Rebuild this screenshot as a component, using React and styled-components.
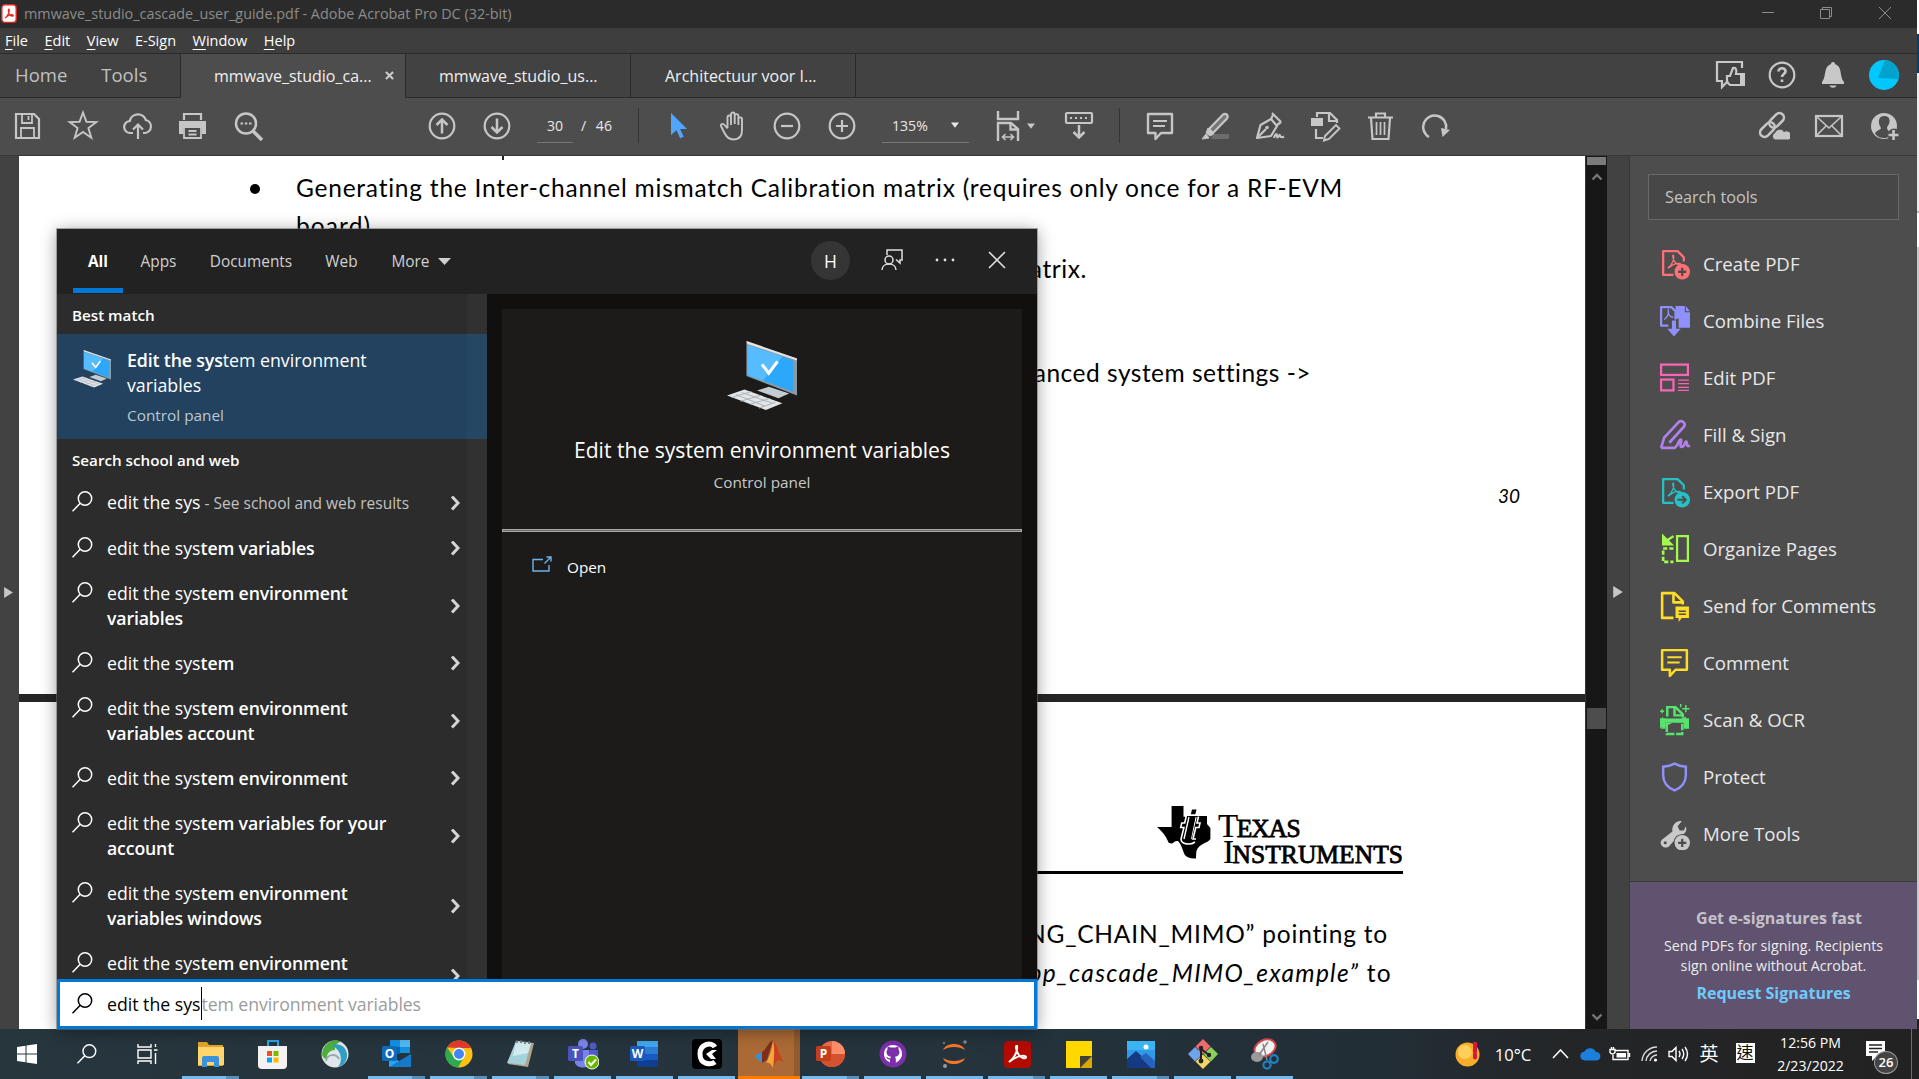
import React from "react";
import styled, { createGlobalStyle, css } from "styled-components";

const Global = createGlobalStyle`
  * { box-sizing: border-box; }
  html, body { margin: 0; background: #1e1e1e; overflow: hidden; }
  svg { display: block; flex: none; }
`;

/* ---------- window shell ---------- */
const Screen = styled.div`
  position: relative;
  width: 1919px;
  height: 1079px;
  display: flex;
  flex-direction: column;
  overflow: hidden;
  font-family: "Open Sans", "Noto Sans CJK TC", sans-serif;
  color: #e6e6e6;
`;
const Desktop = styled.div`
  display: flex;
  height: 1029px;
`;
const Window = styled.div`
  width: 1917px;
  display: flex;
  flex-direction: column;
`;
const EdgeStrip = styled.div`
  width: 2px;
  background: linear-gradient(#fff 0 34px, #00407a 34px 73px, #ececec 73px 211px, #b8b8b8 211px 213px, #fff 213px 247px, #c9c9c9 247px 980px, #fff 980px 1019px, #222 1019px);
`;
const TitleBar = styled.div`
  height: 28px;
  display: flex;
  align-items: center;
  padding: 0 0 1px 1px;
  background: #2b2b2b;
  color: #8c8c8c;
  font-size: 14.4px;
  white-space: pre;
  svg { margin-right: 7px; }
`;
const WinButtons = styled.div`
  margin-left: auto;
  display: flex;
  padding-right: 3px;
  svg { margin: 0; }
`;
const MenuBar = styled.div`
  height: 26px;
  display: flex;
  align-items: center;
  gap: 16.5px;
  padding: 0 5px 1px;
  background: #3e3e3e;
  border-bottom: 1px solid #2a2a2a;
  color: #fff;
  font-size: 14.5px;
`;
const Mnemonic = styled.span`
  text-decoration: underline;
  text-underline-offset: 3px;
`;
const TabBar = styled.div`
  height: 44px;
  display: flex;
  background: #424242;
`;
const HomeTabs = styled.div`
  width: 181px;
  padding: 0 0 2px 15px;
  display: flex;
  align-items: center;
  gap: 34px;
  color: #c0c0c0;
  font-size: 18.5px;
  border-bottom: 1px solid #2a2a2a;
  border-right: 1px solid #2a2a2a;
`;
const FileTab = styled.div`
  width: ${(p) => p.$w}px;
  padding: 0 11px 0 ${(p) => p.$pl || 33}px;
  display: flex;
  align-items: center;
  justify-content: space-between;
  font-size: 16px;
  color: #f0f0f0;
  border-right: 1px solid #2a2a2a;
  border-bottom: 1px solid ${(p) => (p.$active ? "#4d4d4d" : "#2a2a2a")};
  background: ${(p) => (p.$active ? "#4d4d4d" : "transparent")};
`;
const TabRest = styled.div`
  flex: 1;
  display: flex;
  align-items: center;
  justify-content: flex-end;
  padding: 0 18px 1px 0;
  gap: 19.600px;
  color: #c8c8c8;
  border-bottom: 1px solid #2a2a2a;
`;
const ToolBar = styled.div`
  height: 58px;
  display: flex;
  align-items: center;
  padding-bottom: 2px;
  background: #4d4d4d;
  border-bottom: 1px solid #383838;
  color: #c6c6c6;
`;
const Group = styled.div`
  display: flex;
  align-items: center;
  margin-left: ${(p) => p.$gap || 0}px;
  ${(p) => p.$end && css`margin-left: auto; padding-right: 6px;`}
`;
const ToolButton = styled.div`
  width: ${(p) => p.$w || 55}px;
  display: flex;
  justify-content: center;
`;
const Field = styled.div`
  width: ${(p) => p.$w}px;
  height: 33px;
  margin: 2px 0 0 ${(p) => p.$gap}px;
  padding: 0 10px 2px;
  display: flex;
  align-items: center;
  justify-content: space-between;
  border-bottom: 1px solid #767676;
  color: #e8e8e8;
  font-size: 14.1px;
`;
const PageTotal = styled.span`
  margin-left: 8px;
  color: #e8e8e8;
  font-size: 14.1px;
  word-spacing: 6px;
`;
const Divider = styled.div`
  width: 1px;
  height: 35px;
  background: #353535;
  margin-left: ${(p) => p.$gap}px;
`;

/* ---------- document ---------- */
const Body = styled.div`
  flex: 1;
  display: flex;
  min-height: 0;
`;
const Rail = styled.div`
  width: ${(p) => p.$w}px;
  display: flex;
  align-items: center;
  justify-content: center;
  padding: 0 ${(p) => (p.$right ? 0 : 3)}px 1px 0;
  background: #424242;
  color: #c6c6c6;
  ${(p) => p.$right && css`border-right: 1px solid #383838;`}
`;
const Doc = styled.div`
  width: 1566px;
  display: flex;
  flex-direction: column;
  gap: 8px;
  background: #262626;
  color: #000;
  font-family: Lato, sans-serif;
  font-size: 24.5px;
  overflow: hidden;
`;
const Page = styled.div`
  height: ${(p) => p.$h}px;
  background: #fff;
  overflow: hidden;
`;
const Line = styled.div`
  height: 30px;
  line-height: 30px;
  margin-top: ${(p) => p.$mt || 0}px;
  padding-left: ${(p) => p.$left || 0}px;
  padding-right: ${(p) => p.$right || 0}px;
  text-align: ${(p) => (p.$right ? "right" : "left")};
  font-style: ${(p) => (p.$italic ? "italic" : "normal")};
  font-size: ${(p) => p.$size || 24.5}px;
  letter-spacing: ${(p) => p.$ls || 0}px;
  white-space: pre;
`;
const BulletLine = styled(Line)`
  display: flex;
  align-items: center;
  gap: 36px;
`;
const Bullet = styled.span`
  width: 10px;
  height: 10px;
  margin-top: 2px;
  border-radius: 50%;
  background: #000;
`;
const Descender = styled.div`
  width: 2px;
  height: 4px;
  margin-left: 483px;
  background: #222;
`;
const Letterhead = styled.div`
  width: 1153px;
  height: 172px;
  margin-left: 231px;
  padding: 104px 0 0 907px;
  display: flex;
  gap: 7px;
  border-bottom: 3px solid #000;
`;
const BrandName = styled.div`
  font-family: "Liberation Serif", serif;
  font-size: 25.5px;
  line-height: 26px;
  padding-top: 10px;
  letter-spacing: -0.9px;
  -webkit-text-stroke: 0.8px #000;
  div + div { padding-left: 5px; letter-spacing: 0.05px; }
`;
const BigCap = styled.span`
  font-size: 33px;
  line-height: 20px;
  letter-spacing: -1.5px;
  -webkit-text-stroke: 0.2px #000;
`;
const ScrollBar = styled.div`
  width: 22px;
  display: flex;
  flex-direction: column;
  align-items: center;
  padding: 1px 0 6px;
  background: #171717;
  border-left: 1px solid #333;
  color: #777;
`;
const ScrollBlock = styled.div`
  width: 19px;
  height: ${(p) => p.$h}px;
  margin-bottom: ${(p) => p.$mb}px;
  background: ${(p) => p.$c};
`;

/* ---------- tools pane ---------- */
const ToolsPane = styled.div`
  flex: 1;
  display: flex;
  flex-direction: column;
  background: #4d4d4d;
`;
const SearchTools = styled.div`
  height: 46px;
  margin: 18px 18px 15px;
  padding: 0 0 1px 16px;
  display: flex;
  align-items: center;
  background: #474747;
  border: 1px solid #686868;
  color: #c4c4c4;
  font-size: 16.2px;
`;
const ToolRow = styled.div`
  height: 57px;
  display: flex;
  align-items: center;
  gap: 12px;
  padding-left: 28px;
  font-size: 18.65px;
  color: #e8e8e8;
`;
const Promo = styled.div`
  margin-top: auto;
  height: 148px;
  padding-top: 25px;
  display: flex;
  flex-direction: column;
  align-items: center;
  border-top: 1px solid #3a3a3a;
  background: #5f5370;
  text-align: center;
  font-size: 14.25px;
  line-height: 20px;
  color: #ececec;
`;
const PromoTitle = styled.div`
  font-weight: 700;
  font-size: 16px;
  line-height: 22px;
  color: #c6c1c9;
  padding-left: 11px;
  margin-bottom: 7px;
`;
const PromoLink = styled.div`
  margin-top: 7px;
  font-weight: 700;
  font-size: 16px;
  color: #6fcbff;
`;

/* ---------- search flyout ---------- */
const Flyout = styled.div`
  position: absolute;
  left: 57px;
  top: 229px;
  width: 980px;
  height: 800px;
  display: flex;
  flex-direction: column;
  background: #11100e;
  box-shadow: 0 0 0 1px rgba(110, 110, 110, 0.55), 0 2px 16px rgba(0, 0, 0, 0.4);
  color: #fff;
`;
const FlyHead = styled.div`
  height: 65px;
  display: flex;
  align-items: stretch;
  background: #222;
  font-size: 15.4px;
  color: #d0d0d0;
  padding-left: 16px;
`;
const FlyTab = styled.div`
  width: ${(p) => p.$w}px;
  display: flex;
  align-items: center;
  justify-content: center;
  gap: 8px;
  padding-top: ${(p) => (p.$on ? 5 : 0)}px;
  margin-bottom: 1px;
  font-weight: ${(p) => (p.$on ? 700 : 400)};
  color: ${(p) => (p.$on ? "#fff" : "inherit")};
  border-bottom: ${(p) => (p.$on ? "5px solid #0078d7" : "none")};
`;
const FlyActions = styled.div`
  margin-left: auto;
  display: flex;
  align-items: center;
  padding: 0 31px 3px 0;
  color: #e0e0e0;
`;
const Avatar = styled.div`
  width: 39px;
  height: 39px;
  border-radius: 50%;
  background: #353535;
  display: flex;
  align-items: center;
  justify-content: center;
  color: #fff;
  font-size: 17.5px;
  padding-top: 2px;
`;
const ActionCell = styled.div`
  margin-left: ${(p) => p.$gap}px;
`;
const FlyMain = styled.div`
  height: 685px;
  display: flex;
  overflow: hidden;
`;
const Results = styled.div`
  width: 430px;
  background: linear-gradient(90deg, #2c2c2c 0 410px, #313131 410px);
`;
const Heading = styled.div`
  height: ${(p) => p.$h}px;
  padding: ${(p) => p.$pt || 0}px 0 0 15px;
  display: flex;
  align-items: center;
  font-weight: 600;
  font-size: 15.2px;
`;
const BestMatch = styled.div`
  height: 105px;
  display: flex;
  gap: 16px;
  padding: 14px 0 0 16px;
  background: linear-gradient(90deg, #22425f 0 410px, #264763 410px);
  font-size: 17.75px;
  line-height: 25px;
`;
const BestIcon = styled.div`
  padding-top: 2px;
`;
const Sub = styled.div`
  font-size: 15.35px;
  line-height: 25px;
  margin-top: ${(p) => p.$mt}px;
  color: ${(p) => p.$c};
`;
const Strong = styled.span`
  font-weight: 600;
  letter-spacing: -0.15px;
`;
const ResultRow = styled.div`
  min-height: 45px;
  display: flex;
  align-items: center;
  padding: 9px 26px 11px 15px;
  font-size: 17.7px;
  line-height: 25px;
`;
const RowIcon = styled.div`
  align-self: flex-start;
  margin: 1px 14px 0 0;
`;
const RowText = styled.div`
  flex: 1;
  white-space: pre;
`;
const Hint = styled.span`
  font-size: 15.5px;
  color: #c2c2c2;
`;
const Preview = styled.div`
  flex: 1;
  margin: 15px 15px 0;
  background: #1c1b19;
  display: flex;
  flex-direction: column;
`;
const PreviewHead = styled.div`
  height: 220px;
  padding-top: 32px;
  display: flex;
  flex-direction: column;
  align-items: center;
`;
const PreviewRule = styled.div`
  height: 3px;
  background: #6f6d6b;
  border: 1px solid #aaa8a6;
`;
const PreviewTitle = styled.div`
  margin-top: 24px;
  font-size: 21.1px;
  line-height: 30px;
`;
const OpenRow = styled.div`
  display: flex;
  align-items: center;
  gap: 15px;
  padding: 24px 0 0 30px;
  font-size: 15.3px;
  svg { margin-bottom: 5px; }
`;
const SearchInput = styled.div`
  height: 50px;
  display: flex;
  align-items: center;
  padding: 0 0 1px 12px;
  background: #fff;
  border: 3px solid #0078d7;
  color: #000;
  font-size: 17.7px;
  white-space: pre;
  svg { margin-right: 14px; }
`;
const Caret = styled.span`
  width: 1px;
  height: 33px;
  background: #000;
`;
const Ghost = styled.span`
  color: #9c9c9c;
  letter-spacing: -0.1px;
`;

/* ---------- taskbar ---------- */
const Taskbar = styled.div`
  height: 50px;
  display: flex;
  background: linear-gradient(90deg, #27353d 0, #24333c 50%, #222e36 72%, #242527 82%, #222 100%);
  color: #fff;
`;
const TaskCell = styled.div`
  width: ${(p) => p.$w || 62}px;
  display: flex;
  align-items: center;
  justify-content: center;
  padding-top: ${(p) => (p.$state ? 3 : 0)}px;
  border-bottom: ${(p) => (p.$state ? "3px solid transparent" : "none")};
  border-image: ${(p) =>
    p.$state === "one"
      ? "linear-gradient(90deg, transparent 5px, #76b9ed 5px 56px, transparent 56px) 3"
      : p.$state === "many"
      ? "linear-gradient(90deg, transparent 5px, #76b9ed 5px 45px, #5c8fb8 45px 56px, transparent 56px) 3"
      : p.$state === "hot"
      ? "linear-gradient(#ff7a00, #ff7a00) 3"
      : "none"};
  ${(p) => p.$state === "hot" && css`background: linear-gradient(90deg, #ab6a35 0 56px, #935a2e 56px);`}
`;
const PinnedApps = styled.div`
  display: flex;
  margin-left: 4px;
`;
const Tray = styled.div`
  margin-left: auto;
  display: flex;
  align-items: center;
  font-size: 16.6px;
`;
const TrayCell = styled.div`
  width: ${(p) => p.$w}px;
  display: flex;
  justify-content: center;
  white-space: pre;
  ${(p) => p.$cjk && css`font-family: "Noto Sans CJK TC", sans-serif; font-size: 19px; line-height: 24px; padding-bottom: 2px;`}
`;
const ImeMode = styled.span`
  width: 19px;
  height: 20px;
  background: #fff;
  color: #111;
  font-size: 17px;
  line-height: 18px;
  text-align: center;
`;
const Clock = styled.div`
  width: 84px;
  padding-right: 3px;
  text-align: center;
  font-size: 14.1px;
  line-height: 23px;
`;
const Notice = styled.div`
  position: relative;
  width: 57px;
  height: 40px;
  padding: 6px 0 0 11px;
`;
const Count = styled.span`
  position: absolute;
  left: 20px;
  top: 17px;
  width: 24px;
  height: 23px;
  border-radius: 50%;
  background: #444;
  border: 1px solid #9a9a9a;
  font-size: 13px;
  font-weight: 600;
  line-height: 20px;
  text-align: center;
`;
const ShowDesktop = styled.div`
  width: 8px;
  height: 50px;
  border-left: 1px solid #6a6a6a;
`;

/* ---------- icons ---------- */
const Ic = ({ s = 32, w = 2.2, children, ...r }) => (
  <svg width={s} height={s} viewBox="0 0 32 32" fill="none" stroke="currentColor" strokeWidth={w} {...r}>{children}</svg>
);
const F = "currentColor";
const Save = () => <Ic><path d="M4 4h18l5 5v19H4z" /><path d="M10 4v9h10V4M16.500 6v4M9 28V18h13v10" strokeWidth="1.800" /></Ic>;
const Star = () => <Ic w={1.9}><path d="M16 2.500l3.400 9.200 10 .3-8 6 2.900 9.700L16 22l-8.300 5.700L10.600 18l-8-6 10-.3z" /></Ic>;
const CloudUp = () => <Ic><path d="M11 23H8.500a6 6 0 0 1-.7-12 8.300 8.300 0 0 1 16-1 6.600 6.600 0 0 1-.8 13h-2" /><path d="M16 29V15M11 19.500l5-5 5 5" /></Ic>;
const Print = () => <Ic><path d="M7 10V4h17v6" /><path d="M2 11h27v13h-4v-6H6v6H2z" fill={F} stroke="none" /><path d="M7 17v11h17V17M11.500 21h8M11.500 24.500h8" strokeWidth="1.800" /></Ic>;
const Find = () => <Ic w={2.5}><circle cx="14" cy="13.500" r="10" /><path d="M21 21l9 9" strokeWidth="3.500" /><path d="M8.500 13.500h2.500M12.800 13.500h2.500M17 13.500h2.500" strokeWidth="2.200" /></Ic>;
const Up = ({ down }) => <Ic><g transform={down ? "rotate(180 16 16)" : ""}><circle cx="16" cy="16" r="12.300" /><path d="M16 23.500V10M10.500 15L16 9.500l5.500 5.500" strokeWidth="2.500" /></g></Ic>;
const PlusMinus = ({ plus }) => <Ic><circle cx="16" cy="16" r="12.300" /><path d={plus ? "M10 16h12M16 10v12" : "M10 16h12"} /></Ic>;
const Pointer = () => <Ic><path d="M9 3v22l5.500-4.700 3.600 8 3.600-1.600-3.600-7.700h7z" fill="#4ea6ff" stroke="none" /></Ic>;
const Hand = () => <Ic w={1.9}><path d="M10.500 18V7.500c0-2.700 3.500-2.700 3.500 0V15M14 13V4.500c0-2.600 3.700-2.600 3.700 0V14M17.700 6c0-2.600 3.700-2.400 3.700 0v9M21.400 9c0-2.200 3.600-2.200 3.600 0v11c0 6-3 9.500-8.500 9.500-5 0-7-2.500-9-6.500l-3.300-6.500c-1.200-2.500 1.800-3.500 3.300-1.500l3 3.500" /></Ic>;
const Fit = () => <Ic w={2.400}><path d="M6 1v8h20V1" /><path d="M6 31V13h13l7 6v12M18.500 13v6.500H26" /><path d="M10.500 27h11M13.500 24l-3 3 3 3M18.500 24l3 3-3 3" strokeWidth="1.600" /></Ic>;
const Keys = () => <Ic><rect x="3" y="3" width="26" height="10" rx="1" /><path d="M7 8h2M12 8h2M17 8h2M22 8h2" /><path d="M16 15v12M10.500 22l5.500 5.500 5.500-5.500" strokeWidth="2.500" /></Ic>;
const Note = ({ c, s }) => <Ic s={s} color={c} w={2.400}><path d="M4 4h24v19H17l-5.500 6v-6H4z" strokeLinejoin="round" /><path d="M9 11h14M9 16h12" strokeWidth="1.900" /></Ic>;
const Marker = () => <Ic><path d="M10 19L24 4.500c3-2 6 1 4 4L14 23z" fill="#777" /><path d="M9 18l6 6-4 2-4-3zM3 29l4-5 3 4z" fill={F} stroke={F} strokeWidth="1" /><path d="M12 29l3-5h15v5z" fill="#6c6c6c" stroke="none" /></Ic>;
const Nib = () => <Ic><path d="M3 28l3.500-13L17 9l6 7-6 10z" strokeLinejoin="round" /><path d="M4 27l8-8M18 3l9 9M17 9l2-4M23 15l4-3" /><circle cx="13" cy="17.500" r="1.800" fill={F} stroke="none" /><path d="M20 28c1-4 3-5 3-2s2 0 2.500-1 0 4 4.500 1.500" /></Ic>;
const Convert = () => <Ic><path d="M8 7V3h13l7 7v3M20 3v8h8" /><path d="M2 8h12v8H2z" fill={F} stroke="none" /><path d="M7 19v9h7" /><path d="M16 26L27 15l3.500 3.500L20 29l-5 1.500z" strokeWidth="1.900" /></Ic>;
const Trash = () => <Ic><path d="M4 7.500h25M12 7V3.500h9V7M7 8l1.500 21h16L26 8" /><path d="M12.500 12v13M16.500 12v13M20.500 12v13" strokeWidth="1.700" /></Ic>;
const Rotate = () => <Ic w={2.500}><path d="M10 27a11.500 11.500 0 1 1 17-8" /><path d="M31 20l-9-2 1.500 9z" fill={F} stroke="none" /></Ic>;
const LinkCloud = () => <Ic w={2.500}><g transform="rotate(-45 14 15)"><rect x="-1" y="10.500" width="17" height="9" rx="4.500" /><rect x="12" y="10.500" width="17" height="9" rx="4.500" /></g><path d="M17 30a4 4 0 0 1 0-7.500 5 5 0 0 1 9-1 4.500 4.500 0 0 1 5 8.500z" fill={F} stroke="#4d4d4d" strokeWidth="1" /></Ic>;
const Mail = () => <Ic><rect x="3" y="6" width="26" height="20" /><path d="M4 7l12 11L28 7M4 25l9-9M28 25l-9-9" strokeWidth="1.600" /></Ic>;
const AddUser = () => <Ic><circle cx="16" cy="16" r="13" fill={F} stroke="none" /><path d="M16 6c-4 0-5.500 3-5 7 .3 2.500 1.500 4 2 5 .5 1.500-5 2.500-6 5.500 2 3 5 4.500 9 4.500s6-2 6-4-3-4-3-6 2-3 2.500-6c.5-4-1.500-6-5.500-6z" fill="#4d4d4d" stroke="none" /><circle cx="26" cy="25" r="6.500" fill="#4d4d4d" stroke="none" /><path d="M25.500 20v10M20.500 25h10" strokeWidth="2.600" /></Ic>;
const Feedback = () => <Ic w={2.200}><path d="M28 9V3H3v19h5v6l6-6" /><path d="M13 17h3l3-8c3-1 4 2 3 6h6v11H16l-3-3z" /><path d="M26 14h5v13h-5z" fill={F} stroke="none" /></Ic>;
const Help = () => <Ic w={2.200}><circle cx="16" cy="16" r="12.300" /><path d="M12.500 12.500c0-4.500 7.500-4 7 0-.3 2.500-3.500 2.500-3.500 5.500M16 20.500v2.500" strokeWidth="2.600" /></Ic>;
const Bell = () => <Ic><path d="M16 3c1.500 0 2 1 2 2 8 3 4 12 9 18v2H5v-2C10 17 6 8 14 5c0-1 .5-2 2-2zM12.500 26.500h7c-1 3-6 3-7 0z" fill={F} stroke="none" /></Ic>;
const UserDisc = () => <svg width="30" height="30" viewBox="0 0 30 30"><circle cx="15" cy="15" r="15" fill="#00c8ff" /><path d="M16 0a15 15 0 0 1 13 19L9 18z" fill="#00a3cc" /></svg>;
const Tri = ({ d = "down", s = 8 }) => <svg width={s} height={s} viewBox="0 0 10 10"><path d={d === "down" ? "M0 2h10L5 8.500z" : "M1 0v10l8-5z"} fill="currentColor" /></svg>;
const MoreTri = () => <svg width="13" height="7" viewBox="0 0 13 7"><path d="M0 0h13L6.500 7z" fill="currentColor" /></svg>;
const Chev = ({ up }) => <svg width="12" height="12" viewBox="0 0 12 12" fill="none" stroke="currentColor" strokeWidth="2.300"><path d={up ? "M1.500 8.500L6 4l4.500 4.500" : "M1.500 3.500L6 8l4.500-4.500"} /></svg>;
const Lens = ({ s = 21 }) => <svg width={s} height={s} viewBox="0 0 21 21" fill="none" stroke="currentColor" strokeWidth="1.500"><circle cx="13" cy="7.500" r="6.700" /><path d="M8.200 12.300L.5 20.300" /></svg>;
const RowArrow = () => <svg width="11" height="15" viewBox="0 0 11 15" fill="none" stroke="#d4d4d4" strokeWidth="3"><path d="M2 .5l6 6.500L2 13.500" /></svg>;

const Squiggle = () => <path d="M10 20c4-3 6-9 5-12-1-1-1 3 1 6s5 4 6 3-3-2-7 0-5 4-5 3z" strokeWidth="1.300" />;
const toolIcon = {
  create: <Ic s={33} color="#ff7177"><path d="M15 27H5V4h14l6 6v4" strokeLinejoin="round" /><Squiggle /><circle cx="23.500" cy="24" r="7.500" fill={F} stroke="none" /><path d="M19.500 24h8M23.500 20v8" stroke="#4d4d4d" /></Ic>,
  combine: <Ic s={33} color="#9090fa"><path d="M10 21H3V3h10l4 4v8" strokeLinejoin="round" /><path d="M6 15c3-2 5-6 4-9-1 4 2 7 5 7" strokeWidth="1.300" /><path d="M17 2h9v6h5v15H20v-9h-3zM27 2l4 5h-4z" fill={F} stroke="none" /><path d="M13.500 16h4v8h4.500l-6.500 7.500L9 24h4.500z" fill={F} stroke="none" /></Ic>,
  edit: <Ic s={33} color="#f766b4"><rect x="3" y="3.500" width="26" height="10" /><rect x="3" y="18" width="12" height="10.500" /><path d="M19.500 18.500H30M19.500 22H30M19.500 25.500H30M19.500 28.500H30" strokeWidth="1.300" /></Ic>,
  sign: <Ic s={33} color="#b37feb" w={2.600}><path d="M3 29l3-10L20 4c3-2.500 7 1 5.500 4L11 24M3 29h13c3-1 4-8 6-8s-2 7 1 7 3-6 4.500-5-1 5 3.500 4" strokeLinejoin="round" /></Ic>,
  export: <Ic s={33} color="#26c0c7"><path d="M15 27H5V4h14l6 6v4" strokeLinejoin="round" /><Squiggle /><circle cx="23.500" cy="24" r="7.500" fill={F} stroke="none" /><path d="M19 24h8M23.500 20.500l3.500 3.500-3.500 3.500" stroke="#4d4d4d" strokeWidth="2" /></Ic>,
  organize: <Ic s={33} color="#a5f94e"><rect x="18.500" y="4" width="10.500" height="24" /><path d="M15 16H5v13h10" strokeDasharray="4 2" strokeWidth="2.600" /><path d="M15 4L9 8M5 4v8h8z" fill={F} /></Ic>,
  send: <Ic s={33} color="#ffdd26" w={2.500}><path d="M15 28H4V4h12l8 8v3M15 4v9h8" strokeLinejoin="round" /><path d="M17 17h13v11h-7l-3 4v-4h-3z" fill={F} stroke="none" /><path d="M20 21.500h7M20 24.500h7" stroke="#4d4d4d" strokeWidth="1.400" /></Ic>,
  comment: <Note c="#ffdd26" s={33} />,
  scan: <Ic s={33} color="#57e36d" w={2.400}><path d="M9 13V4h8l7 7v3M16 4v8h7" /><path d="M2 17l3-2v-2M27 13v2l3 2v8h-5v-6H7v6H2z" fill={F} stroke="none" /><path d="M2 15h28v4H2z" fill={F} stroke="none" /><path d="M2 15h5v9H2zM25 15h5v9h-5z" fill={F} stroke="none" /><path d="M8.500 20v10h15V20" strokeDasharray="8 1.500" /><path d="M27 2v7M23.500 5.500h7M22 1v3M4 6v4M2 8h4" strokeWidth="1.400" /></Ic>,
  protect: <Ic s={33} color="#9090fa" w={2.400}><path d="M16 3.500c3.500 2 7 2.700 11 3v8c0 8-5 12.500-11 15-6-2.500-11-7-11-15v-8c4-.3 7.500-1 11-3z" /></Ic>,
  more: <Ic s={33} color="#c9c9c9"><path d="M4 28c-2-2-2-5 1-7l9-7c-1-5 3-11 9-10l-4 5 2 4h4l2-4c2 5-2 9-7 9l-9 10c-2 2-5 2-7 0z" fill={F} stroke="none" /><circle cx="7" cy="25" r="1.500" fill="#4d4d4d" stroke="none" /><circle cx="23.500" cy="25" r="8.500" fill="#4d4d4d" stroke="none" /><circle cx="23.500" cy="25" r="7.500" fill={F} stroke="none" /><path d="M19.500 25h8M23.500 21v8" stroke="#4d4d4d" /></Ic>,
};

const Computer = ({ s }) => (
  <svg width={s} height={s} viewBox="0 0 72 72">
    <path d="M20 0l52 18v38L20 36z" fill="#8c99a3" />
    <path d="M20 0l52 18v2L21 3z" fill="#dfe3e6" />
    <path d="M21 4l47 16v32L21 35z" fill="#2ba7fb" />
    <path d="M21 4l36 12-20 25-16-6z" fill="#56bcff" />
    <path d="M36 24l7 9 9-12" fill="none" stroke="#fff" strokeWidth="3.200" />
    <path d="M31 51l12-4 21 7-11 5z" fill="#c3ccd3" />
    <path d="M0 56l18-6 39 14-17 7z" fill="#e3e6e9" />
    <path d="M9 55l30 12M15 53l32 11M5 58l20-6M14 62l20-6M24 65l20-6M33 69l17-6" stroke="#a8b0b6" strokeWidth="1" />
  </svg>
);
const TexasMark = () => (
  <svg width="54" height="53" viewBox="0 0 54 53">
    <path d="M14.600 0h12.700v10H50v8l3.400 4v11c-2 4-11 4-14 12l-.5 7.500c-5 .5-9-1-11-3.500-2.500-5-3-10-7-14-4 0-4 2-6 2.500l-3-.5C9.500 32 8 28 0 21h14.600z" />
    <path d="M27.300 0h13v10h-13z" fill="#fff" />
    <path d="M27.300 0v10h2l-1.600 7h-3l-1 4.500h3.200L24 33c0 6 10 6 14 3M41.500 10.500l-1.500 6.500h3l-1 4.500h-3.200L36 33h3" fill="none" stroke="#fff" strokeWidth="1.600" />
    <path d="M35 3.500h4.500l-1.200 4.700h-4.500z" />
    <path d="M32 11l-5 22M39 11l-5 22" stroke="#fff" strokeWidth="1.400" />
    <path d="M33 11h5.500l-4.500 22h-5.500z" />
  </svg>
);
const PdfMark = () => <svg width="16" height="20" viewBox="0 0 16 20"><rect x=".8" y=".8" width="14.400" height="17.600" rx="3" fill="#fff" stroke="#e1251b" strokeWidth="1.400" /><path d="M4 14c3-2 5-7 4-9-1 0-1 4 1 6s4 1 3 0-5 0-8 3z" fill="none" stroke="#e1251b" strokeWidth="1.200" /></svg>;

/* taskbar artwork */
const App32 = ({ children, w = 32 }) => <svg width={w} height="32" viewBox="0 0 32 32">{children}</svg>;
const Letter = ({ c, x = 1, children }) => (
  <g><rect x={x} y="8" width="15" height="15" rx="1.500" fill={c} /><text x={x + 7.500} y="20" fontSize="12" fontWeight="700" fill="#fff" textAnchor="middle" fontFamily="Open Sans">{children}</text></g>
);
const apps = [
  ["many", <App32><path d="M3 4h9l2 3h14v21H3z" fill="#e0a52c" /><path d="M3 9h26v18H3z" fill="#ffd66b" /><path d="M7 29v-9q0-2 2-2h13q2 0 2 2v9h-5v-5h-7v5z" fill="#3a92dd" /></App32>],
  [null, <App32><path d="M11 8V3h10v5" fill="none" stroke="#2aa7e8" strokeWidth="2" /><path d="M1 8h29v19q0 4-4 4H5q-4 0-4-4z" fill="#f3f3f3" /><path d="M10 13h5v5h-5z" fill="#f25022" /><path d="M16.500 13h5v5h-5z" fill="#7fba00" /><path d="M10 19.500h5v5h-5z" fill="#00a4ef" /><path d="M16.500 19.500h5v5h-5z" fill="#ffb900" /></App32>],
  [null, <App32><circle cx="16" cy="16" r="13.500" fill="#dfe7ea" /><path d="M3 17C3 5 16-1 22 4c-3 0-7 3-6 8-5 0-9 4-8 9-3 0-4-2-5-4z" fill="#4fae3d" /><path d="M13 7c8-3 16 3 15 12-1 6-5 9-9 10 5-6 4-16-6-22z" fill="#2f9fc4" /><path d="M7 23c1-7 10-8 13-2" stroke="#9aa" strokeWidth="2" fill="none" /></App32>],
  ["many", <App32><path d="M9 2h20v13H9z" fill="#1490df" /><path d="M19 2h10v7H19z" fill="#50b8f2" /><path d="M9 9h10v7H9z" fill="#0364b8" /><path d="M8 16l11 8 11-8v13H8z" fill="#28a8ea" /><path d="M8 29l22-13v13z" fill="#1479c8" /><Letter c="#0f6cbd">O</Letter></App32>],
  ["many", <App32><circle cx="16" cy="16" r="13.500" fill="#fbc116" /><path d="M4 9.500A13.500 13.500 0 0 1 28 10H16z" fill="#e33b2e" /><path d="M4 9.500A13.500 13.500 0 0 0 15 29.500l6-10.500L10 18z" fill="#2da94f" /><circle cx="16" cy="16" r="6.400" fill="#fff" /><circle cx="16" cy="16" r="5" fill="#4285f4" /></App32>],
  ["many", <App32><path d="M12 3l17 2-6 24-20-3z" fill="#b3a48c" /><path d="M11 3l15 2-6 22-18-2z" fill="#a5d3dc" /><path d="M11 3l15 2-3 10-15 3z" fill="#d3eaee" /><path d="M12 2v3M16 2v3M20 3v3M24 3v3" stroke="#667" strokeWidth="1.500" /></App32>],
  ["one", <App32><circle cx="16" cy="6" r="5" fill="#7b83eb" /><circle cx="26" cy="8" r="3.500" fill="#5059c9" /><path d="M8 12h18v13c-4 6-16 6-18 0z" fill="#7b83eb" /><path d="M22 12h9v10c0 4-6 6-9 4z" fill="#5059c9" /><Letter c="#4b53bc">T</Letter><circle cx="25" cy="24" r="7" fill="#6bb700" stroke="#fff" strokeWidth="1" /><path d="M21.500 24l2.500 3 5-5.500" fill="none" stroke="#fff" strokeWidth="2" /></App32>],
  ["one", <App32><path d="M8 3h21v7H8z" fill="#41a5ee" /><path d="M8 9h21v7H8z" fill="#2b7cd3" /><path d="M8 16h21v6H8z" fill="#185abd" /><path d="M8 22h21v7H8z" fill="#103f91" /><Letter c="#185abd">W</Letter></App32>],
  ["one", <App32><rect x="1" y="1" width="30" height="30" rx="4" fill="#000" /><path d="M24 9c-3-5-15-4-15 7s11 11 15 8" fill="none" stroke="#fff" strokeWidth="5" /><path d="M15 16l6-4h5l-5 4 4 5h-5z" fill="#fff" /></App32>],
  ["hot", <App32><path d="M1 18l8-4 5 5-5 6z" fill="#3c8fc9" /><path d="M9 14c4-2 7-11 11-12l-6 20-5 3z" fill="#7c2d1d" /><path d="M20 2c4 4 6 15 11 23-5-5-8-3-11 5-2-4-4-6-7-5 3-5 6-14 7-23z" fill="#c9421e" /><path d="M20 2c2 9 1 20 0 28-2-4-4-6-7-5 3-5 6-14 7-23z" fill="#f3a63a" /></App32>],
  ["many", <App32><circle cx="17" cy="16" r="13" fill="#ed6c47" /><path d="M17 3a13 13 0 0 1 13 13H17z" fill="#ff8f6b" /><path d="M6 23a13 13 0 0 0 24-7H17z" fill="#d35230" /><Letter c="#c43e1c">P</Letter></App32>],
  ["one", <App32><circle cx="16" cy="16" r="13.500" fill="#7b2fa8" /><path d="M16 7c-6 0-9 4-9 9 0 4 2.500 7 6 8.500v-3c-3 .5-3-2-4-2.500 2-.5 2.500 2 4.500 1.200l.5-1.500c-3-.5-4.500-2-4.500-5l1-2.500v-3l3 1.200h5l3-1.200v3l1 2.500c0 3-1.500 4.500-4.500 5l.8 2v4c3.500-1.500 6.200-4.700 6.200-8.700 0-5-3-9-9-9z" fill="#fff" /></App32>],
  ["one", <App32><path d="M4 12c3-8 19-8 22 0-6-4-16-4-22 0zM4 20c3 8 19 8 22 0-6 4-16 4-22 0z" fill="#f37726" /><circle cx="26" cy="4" r="1.800" fill="#888" /><circle cx="6" cy="28" r="2" fill="#999" /><circle cx="5" cy="5" r="1.200" fill="#777" /></App32>],
  ["many", <App32><rect x="3" y="3" width="27" height="27" rx="4" fill="#b30b00" /><path d="M8 24c5-3 9-11 8-16-2-1-1 5 2 9s7 4 7 2-9-2-17 5z" fill="none" stroke="#fff" strokeWidth="2" /></App32>],
  ["one", <App32><path d="M3 3h26v16l-11 11H3z" fill="#ffd800" /><path d="M17 18h12v12H17z" fill="#454038" /><path d="M17 30h12V18z" fill="#dba900" /></App32>],
  ["many", <App32><path d="M2 3h28v27H2z" fill="#2f9be8" /><path d="M2 3h28v9H2z" fill="#3ab4f2" /><circle cx="21" cy="9" r="2.500" fill="#fff" /><path d="M2 21l9-8 19 17H2z" fill="#153a84" /><path d="M15 19l6-4 9 8v7h-4z" fill="#2763bb" /></App32>],
  ["one", <App32><path d="M16 1l7.500 7.500L16 16 8.500 8.500z" fill="#f0696b" /><path d="M24 9l7 7-7 7.500L16.500 16z" fill="#8bd05c" /><path d="M8 9l7.500 7L8 23.500 1 16z" fill="#6fa3ee" /><path d="M16 16.500l7.500 7L16 31l-7.500-7.500z" fill="#f5d466" /><path d="M14 9v14M14 11l8 6" stroke="#222" strokeWidth="2" /><circle cx="14" cy="23" r="2.400" fill="#222" /><circle cx="14" cy="10" r="2.200" fill="#222" /><circle cx="22" cy="17" r="2.200" fill="#222" /></App32>],
  ["one", <App32><ellipse cx="16" cy="10" rx="11" ry="8" fill="#f3f3f3" stroke="#d4464b" strokeWidth="2" transform="rotate(-25 16 10)" /><ellipse cx="8" cy="19" rx="6" ry="5" fill="#9a9a9a" /><path d="M10 17l9-13M14 6l4 16" stroke="#888" strokeWidth="1.500" /><circle cx="18" cy="27" r="3.600" fill="none" stroke="#2380c4" strokeWidth="2.200" /><circle cx="25" cy="21" r="3.800" fill="none" stroke="#2380c4" strokeWidth="2.200" /></App32>],
];

const menus = [["F", "ile"], ["E", "dit"], ["V", "iew"], ["", "E-Sign"], ["W", "indow"], ["H", "elp"]];
const tools = [
  ["create", "Create PDF"], ["combine", "Combine Files"], ["edit", "Edit PDF"], ["sign", "Fill & Sign"],
  ["export", "Export PDF"], ["organize", "Organize Pages"], ["send", "Send for Comments"], ["comment", "Comment"],
  ["scan", "Scan & OCR"], ["protect", "Protect"], ["more", "More Tools"],
];
const suggestions = [
  ["tem variables"],
  ["tem environment", "variables"],
  ["tem"],
  ["tem environment", "variables account"],
  ["tem environment"],
  ["tem variables for your", "account"],
  ["tem environment", "variables windows"],
  ["tem environment", ""],
];

const Suggestion = ({ children, second }) => (
  <ResultRow>
    <RowIcon><Lens /></RowIcon>
    <RowText>
      <div>{children}</div>
      {second !== undefined && <div><Strong>{second || "\u00a0"}</Strong></div>}
    </RowText>
    <RowArrow />
  </ResultRow>
);

export default function App() {
  return (
    <Screen>
      <Global />
      <Desktop>
        <Window>
          <TitleBar>
            <PdfMark />
            mmwave_studio_cascade_user_guide.pdf - Adobe Acrobat Pro DC (32-bit)
            <WinButtons>
              <svg width="175" height="28" viewBox="0 0 175 28" fill="none" stroke="#8c8c8c">
                <path d="M23 12.500h12M81.500 9.500h9v9h-9zM83.500 9V7.500h9v9H91M140 7l12 12M152 7l-12 12" />
              </svg>
            </WinButtons>
          </TitleBar>
          <MenuBar>
            {menus.map(([key, rest]) => <span key={rest}><Mnemonic>{key}</Mnemonic>{rest}</span>)}
          </MenuBar>
          <TabBar>
            <HomeTabs><span>Home</span><span>Tools</span></HomeTabs>
            <FileTab $active $w={225}>
              mmwave_studio_ca...
              <svg width="9" height="9" viewBox="0 0 10 10" stroke="#ccc" strokeWidth="2.300"><path d="M1 1l8 8M9 1L1 9" /></svg>
            </FileTab>
            <FileTab $w={225}>mmwave_studio_us...</FileTab>
            <FileTab $w={225} $pl={34}>Architectuur voor I...</FileTab>
            <TabRest>
              <Feedback />
              <Help />
              <Bell />
              <UserDisc />
            </TabRest>
          </TabBar>
          <ToolBar>
            <Group>
              {[Save, Star, CloudUp, Print, Find].map((I, i) => <ToolButton key={i}><I /></ToolButton>)}
            </Group>
            <Group $gap={139}>
              <ToolButton><Up /></ToolButton>
              <ToolButton><Up down /></ToolButton>
            </Group>
            <Field $gap={13} $w={36}>30</Field>
            <PageTotal>/ 46</PageTotal>
            <Divider $gap={26} />
            <Group $gap={12}>
              <ToolButton><Pointer /></ToolButton>
              <ToolButton $w={54}><Hand /></ToolButton>
              <ToolButton><PlusMinus /></ToolButton>
              <ToolButton><PlusMinus plus /></ToolButton>
            </Group>
            <Field $gap={12} $w={87}>135%<Tri /></Field>
            <Group $gap={12}>
              <ToolButton><Fit /></ToolButton>
              <Group $gap={-9}><Tri /></Group>
              <Group $gap={17}><ToolButton><Keys /></ToolButton></Group>
            </Group>
            <Divider $gap={12} />
            <Group $gap={13}>
              {[Note, Marker, Nib, Convert, Trash, Rotate].map((I, i) => <ToolButton key={i}><I /></ToolButton>)}
            </Group>
            <Group $end>
              {[LinkCloud, Mail, AddUser].map((I, i) => <ToolButton key={i}><I /></ToolButton>)}
            </Group>
          </ToolBar>
          <Body>
            <Rail $w={19}><Tri d="right" s={11} /></Rail>
            <Doc>
              <Page $h={538}>
                <Descender />
                <BulletLine $mt={13} $left={231} $ls={0.77}><Bullet />Generating the Inter-channel mismatch Calibration matrix (requires only once for a RF-EVM</BulletLine>
                <Line $mt={8} $left={277} $ls={1.1}>board)</Line>
                <Line $mt={13} $right={498} $ls={0.6}>matrix.</Line>
                <Line $mt={74} $right={274} $ls={0.5}>Advanced system settings -&gt;</Line>
                <Line $mt={93} $right={65} $italic $size={19}>30</Line>
              </Page>
              <Page $h={327}>
                <Letterhead>
                  <TexasMark />
                  <BrandName>
                    <div><BigCap>T</BigCap>EXAS</div>
                    <div><BigCap>I</BigCap>NSTRUMENTS</div>
                  </BrandName>
                </Letterhead>
                <Line $mt={45} $right={197} $ls={0.8}>PROCESSING_CHAIN_MIMO” pointing to</Line>
                <Line $mt={9} $right={193} $ls={1.3}><i>app_cascade_MIMO_example”</i> to</Line>
              </Page>
            </Doc>
            <ScrollBar>
              <ScrollBlock $h={8} $mb={6} $c="#7b7b7b" />
              <Chev up />
              <ScrollBlock $h={0} $mb={525} />
              <ScrollBlock $h={22} $mb={282} $c="#4d4d4d" />
              <Chev />
            </ScrollBar>
            <Rail $w={23} $right><Tri d="right" s={12} /></Rail>
            <ToolsPane>
              <SearchTools>Search tools</SearchTools>
              {tools.map(([k, label]) => <ToolRow key={k}>{toolIcon[k]}{label}</ToolRow>)}
              <Promo>
                <PromoTitle>Get e-signatures fast</PromoTitle>
                <div>Send PDFs for signing. Recipients</div>
                <div>sign online without Acrobat.</div>
                <PromoLink>Request Signatures</PromoLink>
              </Promo>
            </ToolsPane>
          </Body>
        </Window>
        <EdgeStrip />
      </Desktop>

      <Taskbar>
        <TaskCell $w={54}><svg width="20" height="20" viewBox="0 0 20 20" fill="#fff"><path d="M0 3l8.500-1.300v7.800H0zM9.500 1.500L20 0v9.500H9.500zM0 10.500h8.500v7.800L0 17zM9.500 10.500H20V20L9.500 18.500z" /></svg></TaskCell>
        <TaskCell $w={65}><Lens s={20} /></TaskCell>
        <TaskCell $w={57}><svg width="21" height="20" viewBox="0 0 21 20" fill="none" stroke="#fff" strokeWidth="1.400"><path d="M1 0v3h13V0M1 20v-3h13v3M1 6h13v8H1zM18.500 0v3M18.500 9v11M17 6h3.500" /></svg></TaskCell>
        <PinnedApps>
          {apps.map(([state, icon], i) => <TaskCell key={i} $state={state}>{icon}</TaskCell>)}
        </PinnedApps>
        <Tray>
          <TrayCell $w={27}><svg width="25" height="25" viewBox="0 0 25 25"><circle cx="12.500" cy="12.500" r="12" fill="#f9ae2b" /><circle cx="10" cy="10" r="7" fill="#ffd05c" /><path d="M20 1v9M20 12.500v3" stroke="#d6163c" strokeWidth="4" strokeLinecap="round" /></svg></TrayCell>
          <TrayCell $w={64}>10°C</TrayCell>
          <TrayCell $w={30}><svg width="17" height="10" viewBox="0 0 17 10" fill="none" stroke="#fff" strokeWidth="1.500"><path d="M1 9l7.500-8L16 9" /></svg></TrayCell>
          <TrayCell $w={30}><svg width="21" height="14" viewBox="0 0 21 14"><path d="M5 13.500a4.500 4.500 0 0 1-.5-9A6.500 6.500 0 0 1 16 5a4.300 4.300 0 0 1 1 8.500z" fill="#1b7fdc" /></svg></TrayCell>
          <TrayCell $w={30}><svg width="22" height="16" viewBox="0 0 22 16" fill="none" stroke="#fff" strokeWidth="1.400"><path d="M6 4.500h13v9H4V9M20.500 7v4M1 3.500h5v3q-2.500 3-5 0zM2.500 1v2M4.500 1v2" /><path d="M7.500 7h9.500v4.500H7.500z" fill="#fff" stroke="none" /></svg></TrayCell>
          <TrayCell $w={30}><svg width="18" height="18" viewBox="0 0 18 18" fill="none" stroke="#ddd" strokeWidth="1.400"><path d="M1 16A15 15 0 0 1 16 2M5 16A11 11 0 0 1 16 6M9 16a7 7 0 0 1 7-6" /><circle cx="14.500" cy="15" r="1.600" fill="#fff" stroke="none" /></svg></TrayCell>
          <TrayCell $w={28}><svg width="22" height="18" viewBox="0 0 22 18" fill="none" stroke="#fff" strokeWidth="1.400"><path d="M1 6.500h3l4-4v13l-4-4H1zM11 6q2 3 0 6M14 4q3.500 5 0 10M17 2q5 7 0 14" /></svg></TrayCell>
          <TrayCell $w={32} $cjk>英</TrayCell>
          <TrayCell $w={40} $cjk><ImeMode>速</ImeMode></TrayCell>
          <TrayCell $w={5} />
          <Clock>12:56 PM<br />2/23/2022</Clock>
          <Notice>
            <svg width="22" height="22" viewBox="0 0 22 22"><path d="M1 1h19v15h-8l-5 5v-5H1z" fill="#fff" /><path d="M4 5h13M4 8.500h13M4 12h9" stroke="#222" strokeWidth="1.400" /></svg>
            <Count>26</Count>
          </Notice>
          <ShowDesktop />
        </Tray>
      </Taskbar>

      <Flyout>
        <FlyHead>
          <FlyTab $on $w={50}>All</FlyTab>
          <FlyTab $w={71}>Apps</FlyTab>
          <FlyTab $w={114}>Documents</FlyTab>
          <FlyTab $w={67}>Web</FlyTab>
          <FlyTab $w={92}>More<MoreTri /></FlyTab>
          <FlyActions>
            <Avatar>H</Avatar>
            <ActionCell $gap={31}>
              <svg width="22" height="22" viewBox="0 0 22 22" fill="none" stroke="currentColor" strokeWidth="1.500"><path d="M6 6V1h15v10h-2v3l-4-3.500" /><circle cx="8" cy="11" r="4" /><path d="M1 21c0-8 14-8 14 0" /></svg>
            </ActionCell>
            <ActionCell $gap={32}>
              <svg width="20" height="4" viewBox="0 0 20 4" fill="currentColor"><circle cx="2" cy="2" r="1.400" /><circle cx="10" cy="2" r="1.400" /><circle cx="18" cy="2" r="1.400" /></svg>
            </ActionCell>
            <ActionCell $gap={33}>
              <svg width="18" height="18" viewBox="0 0 18 18" stroke="currentColor" strokeWidth="1.600"><path d="M1 1l16 16M17 1L1 17" /></svg>
            </ActionCell>
          </FlyActions>
        </FlyHead>
        <FlyMain>
          <Results>
            <Heading $h={40} $pt={1}>Best match</Heading>
            <BestMatch>
              <BestIcon><Computer s={38} /></BestIcon>
              <div>
                <div><Strong>Edit the sys</Strong>tem environment</div>
                <div>variables</div>
                <Sub $mt={5} $c="#bcc8d1">Control panel</Sub>
              </div>
            </BestMatch>
            <Heading $h={42}>Search school and web</Heading>
            <Suggestion>edit the sys<Hint> - See school and web results</Hint></Suggestion>
            {suggestions.map(([first, second], i) => (
              <Suggestion key={i} second={second}>edit the sys<Strong>{first}</Strong></Suggestion>
            ))}
          </Results>
          <Preview>
            <PreviewHead>
              <Computer s={70} />
              <PreviewTitle>Edit the system environment variables</PreviewTitle>
              <Sub $mt={5} $c="#c8c8c8">Control panel</Sub>
            </PreviewHead>
            <PreviewRule />
            <OpenRow>
              <svg width="20" height="17" viewBox="0 0 20 17" fill="none" stroke="#6cb2ea" strokeWidth="1.400"><path d="M11 3.500H1V15h16V9M12.500 7.500l6-6M14.500 1H19v4.500" /></svg>
              Open
            </OpenRow>
          </Preview>
        </FlyMain>
        <SearchInput><Lens />edit the sys<Caret /><Ghost>tem environment variables</Ghost></SearchInput>
      </Flyout>
    </Screen>
  );
}
